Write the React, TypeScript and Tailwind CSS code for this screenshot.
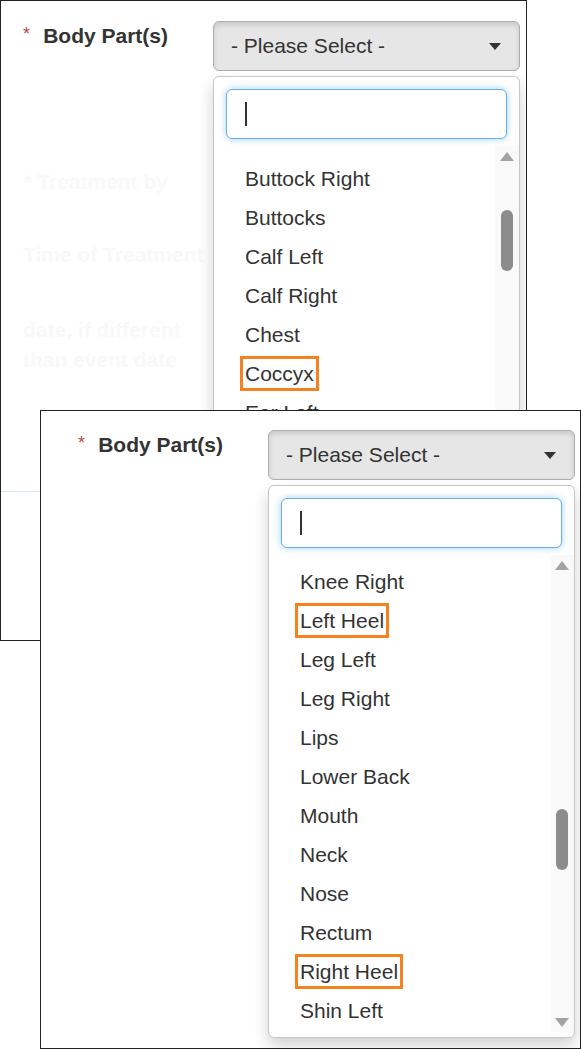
import React from "react"

// Body part dropdown, captured twice at different scroll positions
const firstItems = ["Buttock Right", "Buttocks", "Calf Left", "Calf Right", "Chest", "Coccyx", "Ear Left"]

const secondItems = [
  "Knee Right",
  "Left Heel",
  "Leg Left",
  "Leg Right",
  "Lips",
  "Lower Back",
  "Mouth",
  "Neck",
  "Nose",
  "Rectum",
  "Right Heel",
  "Shin Left",
]

function Caret() {
  return (
    <svg width="12" height="7" viewBox="0 0 12 7" className="shrink-0">
      <polygon points="0,0 12,0 6,7" fill="#333" />
    </svg>
  )
}

function Arrow({ down }: { down?: boolean }) {
  return (
    <svg width="14" height="10" viewBox="0 0 14 10" className="shrink-0">
      <polygon points={down ? "0,1 14,1 7,10" : "7,0 14,9 0,9"} fill="#a3a3a3" />
    </svg>
  )
}

type DropdownProps = {
  items: string[]
  boxed: string[]
  listPad: string
  thumbGap: string
}

function Dropdown({ items, boxed, listPad, thumbGap }: DropdownProps) {
  return (
    <div className="mt-[5px] w-[307px] rounded-[6px] border border-[#c6c6c6] bg-white pb-[5px] shadow-[0_8px_16px_rgba(0,0,0,0.18)]">
      <div className="px-[12px] pb-[7px] pt-[12px]">
        <div className="flex h-[50px] items-center rounded-[6px] border border-[#66afe9] bg-white pl-[18px] shadow-[0_0_7px_rgba(102,175,233,0.6)]">
          <div className="h-[24px] w-[2px] bg-[#333]" />
        </div>
      </div>
      <div className="flex h-[477px]">
        <div className={`flex-1 overflow-hidden ${listPad}`}>
          {items.map((item) => (
            <div key={item} className="flex h-[39px] items-center pl-[26px]">
              <span
                className={`inline-block border-[3px] px-[2px] text-[21px] leading-[29px] text-[#333] ${
                  boxed.includes(item) ? "border-[#f5821f]" : "border-transparent"
                }`}
              >
                {item}
              </span>
            </div>
          ))}
        </div>
        <div className="flex w-[24px] flex-col items-center bg-[#f9f9f9] pb-[5px] pt-[6px]">
          <Arrow />
          <div className={`h-[61px] w-[12px] rounded-full bg-[#8c8c8c] ${thumbGap}`} />
          <div className="mt-auto">
            <Arrow down />
          </div>
        </div>
      </div>
    </div>
  )
}

function Label() {
  return (
    <div className="flex w-[145px] items-start justify-between">
      <span className="text-[18px] leading-[26px] text-[#b94a48]">*</span>
      <span className="text-[21px] font-bold leading-[30px] text-[#333]">Body Part(s)</span>
    </div>
  )
}

function Select() {
  return (
    <div className="flex h-[50px] w-[307px] items-center justify-between rounded-[6px] border border-[#adadad] bg-[#e6e6e6] pl-[17px] pr-[18px] shadow-[inset_0_3px_5px_rgba(0,0,0,0.125)]">
      <span className="text-[21px] text-[#333]">- Please Select -</span>
      <Caret />
    </div>
  )
}

export default function App() {
  return (
    <div className="relative h-[1056px] w-[581px] overflow-hidden bg-white font-['Liberation_Sans',Arial,sans-serif]">
      {/* first capture */}
      <div className="absolute left-0 top-0 h-[641px] w-[527px] overflow-hidden border border-[#222] bg-white">
        <div className="flex pl-[22px] pt-[20px]">
          <div className="w-[190px]">
            <Label />
            <div className="w-[145px] text-right text-[21px] font-bold leading-[30px] text-[#f8f8f8]">
              <div className="mt-[116px]">* Treatment by</div>
              <div className="mt-[43px] whitespace-nowrap">Time of Treatment</div>
              <div className="mt-[45px] whitespace-nowrap">date, if different</div>
              <div className="whitespace-nowrap">than event date</div>
            </div>
            <div className="-ml-[23px] mt-[116px] w-[60px] border-t border-[#d4ecf0]" />
          </div>
          <div>
            <Select />
            <Dropdown items={firstItems} boxed={["Coccyx"]} listPad="pt-[13px]" thumbGap="mt-[48px]" />
          </div>
        </div>
      </div>

      {/* second capture */}
      <div className="absolute left-[40px] top-[410px] h-[639px] w-[541px] overflow-hidden border border-[#222] bg-white">
        <div className="flex pl-[37px] pt-[19px]">
          <div className="w-[190px]">
            <Label />
          </div>
          <div>
            <Select />
            <Dropdown
              items={secondItems}
              boxed={["Left Heel", "Right Heel"]}
              listPad="pt-[7px]"
              thumbGap="mt-[238px]"
            />
          </div>
        </div>
      </div>
    </div>
  )
}
